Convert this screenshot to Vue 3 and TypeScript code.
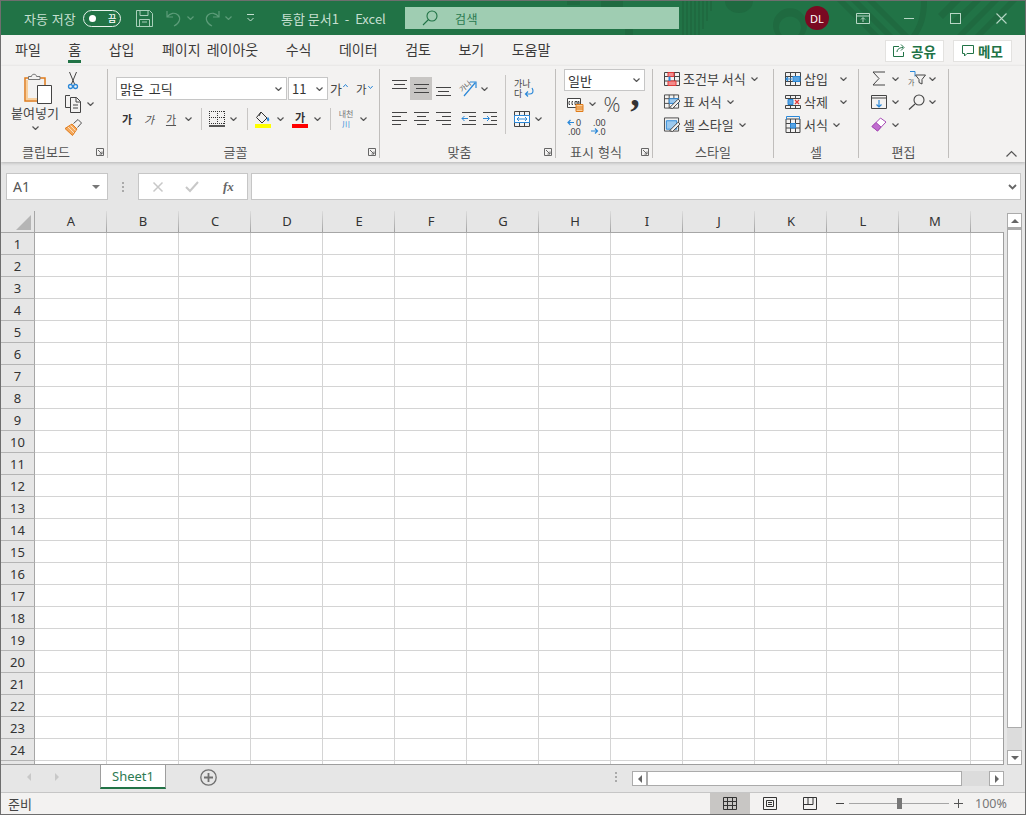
<script setup lang="ts">
const tabs = ['파일', '홈', '삽입', '페이지 레이아웃', '수식', '데이터', '검토', '보기', '도움말']
const columns = ['A', 'B', 'C', 'D', 'E', 'F', 'G', 'H', 'I', 'J', 'K', 'L', 'M', '']
const rows = Array.from({ length: 25 }, (_, i) => (i < 24 ? String(i + 1) : ''))
</script>

<template>
  <div class="window">
    <svg class="sprite" width="0" height="0" aria-hidden="true">
      <symbol id="chev" viewBox="0 0 7 4"><path d="M.5.5 3.5 3.5 6.5.5" fill="none" stroke="#555" stroke-width="1.2" /></symbol>
      <symbol id="chev-pale" viewBox="0 0 7 4"><path d="M.5.5 3.5 3.5 6.5.5" fill="none" stroke="#5c9c79" stroke-width="1.2" /></symbol>
      <symbol id="launcher" viewBox="0 0 8 8"><path d="M.5 7.5V.5h7v7zM2 2l4 4M6 3.5V6H3.5" fill="none" stroke="#666" /></symbol>
    </svg>

    <header class="titlebar">
      <svg class="pattern" width="1024" height="34" viewBox="0 0 1024 34" fill="#1f6a40">
        <path d="M566 0h13v4h-13zM600 0h22v6h-22zM624 28h8v6h-8zM681 0h2v34h-2zM685 0h2v34h-2zM689 0h2v34h-2zM693 0h2v34h-2zM697 0h2v34h-2zM701 0h2v28h-2zM705 0h2v20h-2zM709 0h2v10h-2z" />
        <path d="M724 0h28a14 12 0 0 1-28 0z" />
        <path d="M775 34a17 17 0 1 1 28 0h-6a11 11 0 1 0-16 0z" />
        <path d="M836 0h8l34 34h-8zM850 0h8l34 34h-8zM866 0h8l34 34h-8z" />
        <path d="M920 0h6c0 14-3 25-9 34h-7c7-9 10-20 10-34z" />
        <path d="M950 0h10l-18 18-5-5zM972 0h8l-24 24-5-5zM990 0h8l-34 34h-8zM1008 0h8l-34 34h-8z" />
      </svg>
      <span class="autosave">자동 저장</span>
      <span class="toggle"><i class="knob" /><b>끔</b></span>
      <svg class="ic-save" width="17" height="17" viewBox="0 0 17 17" fill="none" stroke="#a9d0ba"><path d="M.5.5h13l3 3v13H.5zM4 .5v5h8v-5M3.5 16.5v-7h10v7M6 12h5" /></svg>
      <svg class="ic-undo" width="15" height="17" viewBox="0 0 15 17" fill="none" stroke="#5c9c79" stroke-width="1.2"><path d="M1 1v6h6M1 7c3-4 8-5 11-2 3 3 2 8-4 11" /></svg>
      <svg class="ic-chev1" width="7" height="4"><use href="#chev-pale" /></svg>
      <svg class="ic-redo" width="15" height="17" viewBox="0 0 15 17" fill="none" stroke="#5c9c79" stroke-width="1.2"><path d="M14 1v6H8M14 7c-3-4-8-5-11-2-3 3-2 8 4 11" /></svg>
      <svg class="ic-chev2" width="7" height="4"><use href="#chev-pale" /></svg>
      <svg class="ic-more" width="9" height="8" viewBox="0 0 9 8" fill="none" stroke="#c3dfd0"><path d="M1 .5h7M1.5 4 4.5 7l3-3" /></svg>
      <span class="doc">통합 문서1&nbsp; -&nbsp; Excel</span>
      <div class="search">
        <svg width="16" height="16" viewBox="0 0 16 16" fill="none" stroke="#217346" stroke-width="1.1"><circle cx="10" cy="6" r="5" /><path d="M6.5 9.5 1 15" /></svg>
        <span>검색</span>
      </div>
      <span class="avatar">DL</span>
      <svg class="ic-display" width="14" height="11" viewBox="0 0 14 11" fill="none" stroke="#b7d6c5"><path d="M.5.5h13v10H.5zM.5 3h13M7 9V5M5 6.5 7 4.5l2 2" /></svg>
      <span class="ic-min" />
      <span class="ic-max" />
      <svg class="ic-close" width="11" height="11" viewBox="0 0 11 11" fill="none" stroke="#b7d6c5" stroke-width="1.1"><path d="M.5.5l10 10M10.5.5l-10 10" /></svg>
    </header>

    <nav class="tabs">
      <span v-for="tab in tabs" :key="tab" :class="['tab', { active: tab === '홈' }]">{{ tab }}</span>
      <span class="spacer" />
      <button class="share">
        <svg width="14" height="13" viewBox="0 0 14 13" fill="none" stroke="#217346"><path d="M6 2.5H.5v10h10V8M4 8c0-3 3-4.5 6-4.5M8 .5l3 3-3 3" /></svg>
        공유
      </button>
      <button class="share memo">
        <svg width="12" height="12" viewBox="0 0 12 12" fill="none" stroke="#217346"><path d="M.5.5h11v8H5L2.5 11V8.5h-2z" /></svg>
        메모
      </button>
    </nav>

    <section class="ribbon">
      <div class="group g-clip">
        <div class="body clip">
          <div class="paste">
            <svg width="28" height="32" viewBox="0 0 28 32">
              <path d="M1 5h20v23H1z" fill="#f3f2f1" stroke="#e07b1a" stroke-width="1.5" />
              <path d="M2 25h12v2H2zM2 7h2v18H2z" fill="#f8cf9c" />
              <path d="M4.5 6.5v-3h3c0-3 5-3 5 0h3.5v3z" fill="#f3f2f1" stroke="#777" />
              <path d="M13.5 12.5h14v18h-14z" fill="#fff" stroke="#444" />
            </svg>
            <span class="paste-label">붙여넣기</span>
            <svg class="paste-chev" width="7" height="4"><use href="#chev" /></svg>
          </div>
          <div class="clip-tools">
            <svg class="scissors" width="10" height="18" viewBox="0 0 10 18" fill="none" stroke="#444"><path d="M1.5 0l5 12M8.5 0l-5 12" /><circle cx="2.5" cy="14.5" r="2" stroke="#2b88d8" stroke-width="1.3" /><circle cx="7.5" cy="14.5" r="2" stroke="#2b88d8" stroke-width="1.3" /></svg>
            <div class="copy-row">
              <svg width="17" height="18" viewBox="0 0 17 18" fill="none" stroke="#444"><path d="M5 .5H.5v12H5" /><path d="M5.5 2.5h6l4 4v11h-10zM11 2.5V7h4.5M8 10h5M8 13h5" fill="#f3f2f1" /></svg>
              <svg width="7" height="4"><use href="#chev" /></svg>
            </div>
            <svg class="brush" width="17" height="17" viewBox="0 0 17 17"><path d="M0 9.5 7 5l5 5-4.5 6.5z" fill="#f5a95c" stroke="#e07b1a" /><path d="M3 8l6 6M5.5 6.500l5 5" stroke="#f8e0c4" /><path d="M8.5 4.5 13 .5l3.5 3.500-4 4.500" fill="#f3f2f1" stroke="#555" /></svg>
          </div>
        </div>
        <div class="label"><span>클립보드</span><svg class="launch" width="8" height="8"><use href="#launcher" /></svg></div>
      </div>

      <div class="group g-font">
        <div class="body font">
          <div class="font-top">
            <div class="combo c-font"><span>맑은 고딕</span><svg width="7" height="4"><use href="#chev" /></svg></div>
            <div class="combo c-size"><span>11</span><svg width="7" height="4"><use href="#chev" /></svg></div>
            <span class="grow">가<svg width="5" height="3" viewBox="0 0 5 3" fill="none" stroke="#2b88d8"><path d="M.3 3 2.5.5 4.7 3" /></svg></span>
            <span class="shrink">가<svg width="5" height="3" viewBox="0 0 5 3" fill="none" stroke="#2b88d8"><path d="M.3 0l2.2 2.5L4.7 0" /></svg></span>
          </div>
          <div class="font-bottom">
            <b class="ga">가</b>
            <em class="ga light">가</em>
            <u class="ga light">가</u>
            <svg width="7" height="4"><use href="#chev" /></svg>
            <i class="vsep" />
            <svg width="16" height="16" viewBox="0 0 16 16" fill="none" stroke="#333" stroke-dasharray="1 1"><path d="M0 .5h16M0 6.5h16M0 12.5h16M.5 0v13M8.5 0v13M15.5 0v13" /><path d="M0 15h16" stroke-dasharray="none" stroke-width="1.5" stroke="#222" /></svg>
            <svg width="7" height="4"><use href="#chev" /></svg>
            <i class="vsep" />
            <div class="colored">
              <svg width="16" height="13" viewBox="0 0 16 13" fill="none" stroke="#333"><path d="M6 1l6 6-5 5-5.500-5.500zM6 1 4 5" /><path d="M13 6c1.500 1.500 2 3.500 0 4.500-1.500-1-1.500-3 0-4.500z" fill="#2b88d8" stroke="none" /></svg>
              <i class="bar yellow" />
            </div>
            <svg width="7" height="4"><use href="#chev" /></svg>
            <div class="colored"><b class="ga-color">가</b><i class="bar red" /></div>
            <svg width="7" height="4"><use href="#chev" /></svg>
            <i class="vsep" />
            <div class="phonetic"><span>내천</span><i>川</i></div>
            <svg width="7" height="4"><use href="#chev" /></svg>
          </div>
        </div>
        <div class="label"><span>글꼴</span><svg class="launch" width="8" height="8"><use href="#launcher" /></svg></div>
      </div>

      <div class="group g-align">
        <div class="body align">
          <div class="align-main">
            <div class="align-r1">
              <svg class="up" width="15" height="10" viewBox="0 0 15 10" stroke="#444"><path d="M0 .5h15M2 4.5h11M0 8.5h15" /></svg>
              <span class="pressed"><svg width="15" height="10" viewBox="0 0 15 10" stroke="#444"><path d="M0 .5h15M2 4.5h11M0 8.5h15" /></svg></span>
              <svg class="down" width="15" height="10" viewBox="0 0 15 10" stroke="#444"><path d="M0 .5h15M2 4.5h11M0 8.5h15" /></svg>
              <svg width="18" height="17" viewBox="0 0 18 17"><text x="1" y="11" font-size="7" fill="#555" transform="rotate(-40 4 9)" font-family="Noto Sans CJK KR">가나</text><path d="M5 16 16 3M11 2h6v6" fill="none" stroke="#2b88d8" stroke-width="1.2" /></svg>
              <svg width="7" height="4"><use href="#chev" /></svg>
            </div>
            <div class="align-r2">
              <svg width="15" height="14" viewBox="0 0 15 14" stroke="#444"><path d="M0 .5h15M0 4.5h9M0 8.5h15M0 12.5h9" /></svg>
              <svg width="15" height="14" viewBox="0 0 15 14" stroke="#444"><path d="M0 .5h15M3 4.5h9M0 8.5h15M3 12.5h9" /></svg>
              <svg width="15" height="14" viewBox="0 0 15 14" stroke="#444"><path d="M0 .5h15M6 4.5h9M0 8.5h15M6 12.5h9" /></svg>
              <svg width="15" height="14" viewBox="0 0 15 14" fill="none" stroke="#444"><path d="M1 .5h14M8 4.5h7M8 8.5h7M1 12.5h14" /><path d="M7 6.5H1M3.5 4 1 6.5 3.5 9" stroke="#2b88d8" /></svg>
              <svg width="15" height="14" viewBox="0 0 15 14" fill="none" stroke="#444"><path d="M0 .5h14M8 4.5h6M8 8.5h6M0 12.5h14" /><path d="M0 6.5h6M4 4l2.5 2.5L4 9" stroke="#2b88d8" /></svg>
            </div>
          </div>
          <div class="align-wrap">
            <div class="wrap-ic">
              <span>가나<br />다</span>
              <svg width="10" height="10" viewBox="0 0 10 10" fill="none" stroke="#2b88d8" stroke-width="1.2"><path d="M8 0c2 3 1 6-2 6H1.5M4 3.5 1.5 6 4 8.5" /></svg>
            </div>
            <div class="merge-row">
              <svg width="16" height="16" viewBox="0 0 16 16" fill="none" stroke="#444"><path d="M.5.5h15v15H.5zM.5 4.5h15M.5 11.5h15M5.5.5v4M10.5.5v4M5.5 11.5v4M10.5 11.5v4" /><path d="M.5 4.5h15v7H.5z" stroke="#2b88d8" fill="#fff" /><path d="M3 8h10M5 6 3 8l2 2M11 6l2 2-2 2" stroke="#2b88d8" /></svg>
              <svg width="7" height="4"><use href="#chev" /></svg>
            </div>
          </div>
        </div>
        <div class="label"><span>맞춤</span><svg class="launch" width="8" height="8"><use href="#launcher" /></svg></div>
      </div>

      <div class="group g-num">
        <div class="body num">
          <div class="combo c-num"><span>일반</span><svg width="7" height="4"><use href="#chev" /></svg></div>
          <div class="num-r2">
            <svg width="17" height="15" viewBox="0 0 17 15"><path d="M.5 1.5h13v9H.5z" fill="#fff" stroke="#444" /><path d="M3 4.5H2v3h1M6 4.5H5v3h1M8 4.5h2v3H8zM11 4.5h1v3h-1z" fill="none" stroke="#444" /><path d="M9 7.5h7v7H9z" fill="#f8cf9c" stroke="#e07b1a" /><path d="M9 10h7M9 12h7" stroke="#e07b1a" /></svg>
            <svg width="7" height="4"><use href="#chev" /></svg>
            <span class="percent">%</span>
            <span class="comma">,</span>
          </div>
          <div class="num-r3">
            <svg width="16" height="18" viewBox="0 0 16 18"><path d="M7 4.5H1M3.5 2 1 4.5 3.5 7" fill="none" stroke="#2b88d8" stroke-width="1.2" /><text x="9" y="8" font-size="9" fill="#444" font-family="Noto Sans">0</text><text x="1" y="17" font-size="9" fill="#444" font-family="Noto Sans">.00</text></svg>
            <svg width="16" height="18" viewBox="0 0 16 18"><text x="3" y="8" font-size="9" fill="#444" font-family="Noto Sans">.00</text><path d="M1 13h6M5 10.5 7.5 13 5 15.5" fill="none" stroke="#2b88d8" stroke-width="1.2" /><text x="8" y="17" font-size="9" fill="#444" font-family="Noto Sans">.0</text></svg>
          </div>
        </div>
        <div class="label"><span>표시 형식</span><svg class="launch" width="8" height="8"><use href="#launcher" /></svg></div>
      </div>

      <div class="group g-style">
        <div class="body stack">
          <div class="item">
            <svg width="16" height="14" viewBox="0 0 16 14" fill="none" stroke="#444"><path d="M.5.5h15v13H.5zM.5 4.5h15M.5 9h15M5.5.5v13M10.5.5v13" /><path d="M4 .5h6v4H4zM4 9h8v4.5H4z" fill="#f28b8b" stroke="#e03a3a" /><path d="M4.5 4.5h2V9h-2z" fill="#2b88d8" stroke="none" /></svg>
            <span>조건부 서식</span>
            <svg width="7" height="4"><use href="#chev" /></svg>
          </div>
          <div class="item">
            <svg width="17" height="15" viewBox="0 0 17 15" fill="none" stroke="#444"><path d="M.5.5h15v14H.5zM.5 4.5h15M.5 9.5h15M5.5.5v14M10.5.5v14" /><path d="M5.5 4.5h10v5h-10z" fill="#9cc9ee" stroke="#2b88d8" /><path d="M6 14 15 5l2 2-8 8z" fill="#f3f2f1" stroke="#444" /></svg>
            <span>표 서식</span>
            <svg width="7" height="4"><use href="#chev" /></svg>
          </div>
          <div class="item">
            <svg width="17" height="15" viewBox="0 0 17 15" fill="none" stroke="#444"><path d="M.5.5h15v14H.5z" /><path d="M2.5 3.5h11v9h-11z" fill="#9cc9ee" stroke="#2b88d8" /><path d="M6 14 15 5l2 2-8 8z" fill="#f3f2f1" stroke="#444" /></svg>
            <span>셀 스타일</span>
            <svg width="7" height="4"><use href="#chev" /></svg>
          </div>
        </div>
        <div class="label"><span>스타일</span></div>
      </div>

      <div class="group g-cells">
        <div class="body stack">
          <div class="item">
            <svg width="16" height="14" viewBox="0 0 16 14" fill="none" stroke="#444"><path d="M.5.5h15v13H.5zM.5 4.5h15M.5 9.5h15M5.5.5v13M10.5.5v13" /><path d="M8 4.5h7v5H8z" fill="#5aa5e3" stroke="#2b88d8" /><path d="M7 7H1M3 5 1 7l2 2" stroke="#2b88d8" stroke-width="1.2" /></svg>
            <span>삽입</span>
            <svg class="far" width="7" height="4"><use href="#chev" /></svg>
          </div>
          <div class="item">
            <svg width="16" height="14" viewBox="0 0 16 14" fill="none" stroke="#444"><path d="M.5.5h15v3H.5zM.5 10.5h15v3H.5zM5.5.5v3M10.5.5v3M5.5 10.5v3M10.5 10.5v3" /><path d="M3 4.5h5v5H3z" fill="#5aa5e3" stroke="#2b88d8" /><path d="M10 5l4 4M14 5l-4 4" stroke="#e03a3a" stroke-width="1.3" /></svg>
            <span>삭제</span>
            <svg class="far" width="7" height="4"><use href="#chev" /></svg>
          </div>
          <div class="item">
            <svg width="16" height="17" viewBox="0 0 16 17" fill="none" stroke="#444"><path d="M1 3h14v13.5H1zM1 7.5h14M1 12h14M5.5 3v13.5M10.5 3v13.5" /><path d="M5.5 7.5h5V12h-5z" fill="#5aa5e3" stroke="#2b88d8" /><path d="M1.5.5h13M1.5.5v3M14.5.5v3" stroke="#2b88d8" /></svg>
            <span>서식</span>
            <svg width="7" height="4"><use href="#chev" /></svg>
          </div>
        </div>
        <div class="label"><span>셀</span></div>
      </div>

      <div class="group g-edit">
        <div class="body edit">
          <div class="edit-row">
            <svg width="14" height="15" viewBox="0 0 14 15" fill="none" stroke="#444"><path d="M13 1H1l6 6.5L1 14h12" /></svg>
            <svg width="7" height="4"><use href="#chev" /></svg>
            <svg width="18" height="15" viewBox="0 0 18 15" fill="none"><path d="M2 .5h5v5" stroke="#2b88d8" /><text x="0" y="14" font-size="7" fill="#555" font-family="Noto Sans CJK KR">가</text><path d="M7.5 4h10L14 8.5V13l-3-1.5v-3z" stroke="#444" /></svg>
            <svg width="7" height="4"><use href="#chev" /></svg>
          </div>
          <div class="edit-row">
            <svg width="16" height="14" viewBox="0 0 16 14" fill="none" stroke="#444"><path d="M.5.5h15v13H.5zM.5 3h15" /><path d="M8 5v7M5.5 9.5 8 12l2.5-2.5" stroke="#2b88d8" stroke-width="1.2" /></svg>
            <svg width="7" height="4"><use href="#chev" /></svg>
            <svg width="17" height="16" viewBox="0 0 17 16" fill="none" stroke="#444" stroke-width="1.1"><circle cx="11" cy="6" r="5" /><path d="M7 10 1 15.5" /></svg>
            <svg width="7" height="4"><use href="#chev" /></svg>
          </div>
          <div class="edit-row">
            <svg width="16" height="15" viewBox="0 0 16 15"><path d="M1 9.5 9.5 1 15 5l-8.5 9z" fill="#fff" stroke="#a64ab5" /><path d="M1 9.5 5 5.5l5 4.5-3.5 4z" fill="#c06dcf" stroke="#a64ab5" /></svg>
            <svg width="7" height="4"><use href="#chev" /></svg>
          </div>
        </div>
        <div class="label"><span>편집</span></div>
      </div>

      <div class="collapse">
        <svg width="11" height="6" viewBox="0 0 11 6" fill="none" stroke="#555" stroke-width="1.2"><path d="M.5 5.5 5.5.5l5 5" /></svg>
      </div>
    </section>

    <div class="formula">
      <div class="namebox"><span>A1</span><i class="tri" /></div>
      <span class="dots"><i /><i /><i /></span>
      <div class="fx-btns">
        <svg width="10" height="10" viewBox="0 0 10 10" stroke="#c8c8c8" stroke-width="1.5"><path d="M.5.5l9 9M9.5.5l-9 9" /></svg>
        <svg width="14" height="11" viewBox="0 0 14 11" fill="none" stroke="#c8c8c8" stroke-width="2"><path d="M1 6l4 4 8-9" /></svg>
        <em>fx</em>
      </div>
      <div class="input">
        <svg width="9" height="6" viewBox="0 0 9 6" fill="none" stroke="#666" stroke-width="1.8"><path d="M1 1l3.5 3.5L8 1" /></svg>
      </div>
    </div>

    <div class="workbook">
      <div class="sheet">
        <div class="head-row">
          <div class="corner"><i /></div>
          <div v-for="col in columns" :key="col" class="col-head">{{ col }}</div>
        </div>
        <div v-for="row in rows" :key="row" class="row">
          <div class="row-head">{{ row }}</div>
          <div v-for="col in columns" :key="col" class="cell" />
        </div>
      </div>
      <div class="vscroll">
        <span class="sbtn"><i class="t-up" /></span>
        <span class="vthumb" />
        <span class="vtrack" />
        <span class="sbtn"><i class="t-down" /></span>
      </div>
    </div>

    <div class="sheetbar">
      <i class="nav-l" />
      <i class="nav-r" />
      <div class="sheet-tab">Sheet1</div>
      <svg class="add" width="17" height="17" viewBox="0 0 17 17" fill="none" stroke="#707070"><circle cx="8.5" cy="8.5" r="7.7" stroke-width="1.3" /><path d="M8.5 4v9M4 8.5h9" stroke-width="1.8" /></svg>
      <span class="dots bar-dots"><i /><i /><i /></span>
      <div class="hscroll">
        <span class="sbtn"><i class="t-left" /></span>
        <span class="hthumb" />
        <span class="htrack" />
        <span class="sbtn"><i class="t-right" /></span>
      </div>
    </div>

    <footer class="status">
      <span class="ready">준비</span>
      <span class="view on">
        <svg width="14" height="13" viewBox="0 0 14 13" fill="none" stroke="#333"><path d="M.5.5h13v12H.5zM.5 4.5h13M.5 8.5h13M4.5.5v12M9.5.5v12" /></svg>
      </span>
      <span class="view">
        <svg width="14" height="13" viewBox="0 0 14 13" fill="none" stroke="#333"><path d="M.5.5h13v12H.5zM3.5 3.5h7v6h-7zM5 5.5h4M5 7.5h4" /></svg>
      </span>
      <span class="view">
        <svg width="14" height="13" viewBox="0 0 14 13" fill="none" stroke="#333"><path d="M.5.5h13v12H.5zM.5 7.5H10v-7M5 .5v7" /></svg>
      </span>
      <span class="zoom-minus" />
      <div class="slider"><i /></div>
      <span class="zoom-plus" />
      <span class="pct">100%</span>
    </footer>
  </div>
</template>

<style>
html, body { margin: 0; background: #fff; }
</style>

<style scoped>
.window {
  width: 1026px;
  height: 815px;
  box-sizing: border-box;
  border: 1px solid #6e6e6e;
  background: #e6e6e6;
  display: flex;
  flex-direction: column;
  overflow: hidden;
  font-family: "Noto Sans CJK KR", "Noto Sans", sans-serif;
  color: #444;
}
.sprite { position: absolute; }
svg { display: block; flex: none; overflow: visible; }

/* title bar */
.titlebar {
  position: relative;
  height: 34px;
  flex: none;
  background: #217346;
  display: flex;
  align-items: center;
  color: #c5dfd0;
  font-size: 13px;
}
.titlebar > *:not(.pattern) { position: relative; }
.pattern { position: absolute; left: 0; top: 0; }
.autosave { margin-left: 23px; width: 59px; white-space: nowrap; word-spacing: 1px; }
.toggle {
  width: 36px;
  height: 15px;
  border: 1px solid #e8f2ec;
  border-radius: 9px;
  display: flex;
  align-items: center;
}
.knob { width: 7px; height: 7px; margin-left: 5px; border-radius: 50%; background: #fff; }
.toggle b { margin-left: 12px; font-size: 9px; font-weight: 500; color: #fff; }
.ic-save { margin-left: 15px; }
.ic-undo { margin-left: 13px; }
.ic-chev1 { margin-left: 6px; }
.ic-redo { margin-left: 11px; }
.ic-chev2 { margin-left: 5px; }
.ic-more { margin-left: 14px; }
.doc { margin-left: 26px; width: 124px; white-space: nowrap; }
.search {
  width: 274px;
  height: 22px;
  background: #9fcdb2;
  display: flex;
  align-items: center;
  color: #2a7a50;
  font-size: 12px;
}
.search svg { margin-left: 17px; }
.search span { margin-left: 17px; letter-spacing: .5px; }
.avatar {
  margin-left: 126px;
  width: 24px;
  height: 24px;
  border-radius: 50%;
  background: #7a0a22;
  color: #fff;
  font: 11px "Noto Sans", sans-serif;
  display: flex;
  align-items: center;
  justify-content: center;
}
.ic-display { margin-left: 27px; }
.ic-min { margin-left: 34px; width: 10px; height: 1px; background: #b7d6c5; }
.ic-max { margin-left: 36px; width: 9px; height: 9px; border: 1px solid #b7d6c5; }
.ic-close { margin-left: 35px; }

/* tabs */
.tabs {
  height: 31px;
  flex: none;
  background: #f3f2f1;
  display: flex;
  align-items: center;
  gap: 27.5px;
  padding: 0 13px 3px 14px;
  box-sizing: border-box;
  font-size: 14px;
  line-height: 20px;
  color: #3b3a39;
}
.tab { position: relative; word-spacing: 3px; white-space: nowrap; }
.tab.active::after {
  content: "";
  position: absolute;
  left: 0;
  right: 0;
  bottom: -4px;
  height: 3px;
  background: #217346;
}
.spacer { flex: 1; }
.share {
  margin-top: 3px;
  margin-right: -18.5px;
  width: 59px;
  height: 22px;
  border: 1px solid #e3e2e0;
  background: #fff;
  color: #217346;
  font: 700 13.5px "Noto Sans CJK KR", sans-serif;
  display: flex;
  align-items: center;
  justify-content: center;
  gap: 4px;
  padding: 0;
}
.memo { margin-right: 0; }

/* ribbon */
.ribbon {
  height: 96px;
  flex: none;
  background: #f3f2f1;
  display: flex;
  align-items: flex-start;
  padding-top: 3px;
  box-sizing: border-box;
  font-size: 13px;
  position: relative;
  box-shadow: 0 1px 3px rgba(0, 0, 0, .22);
}
.group {
  height: 89px;
  box-sizing: border-box;
  border-right: 1px solid #c0bebc;
  display: flex;
  flex-direction: column;
  flex: none;
}
.g-clip { width: 107px; }
.g-font { width: 272px; }
.g-align { width: 176px; }
.g-num { width: 97px; }
.g-style { width: 121px; }
.g-cells { width: 85px; }
.g-edit { width: 90px; }
.body { height: 77px; flex: none; box-sizing: border-box; }
.label {
  height: 12px;
  line-height: 12px;
  display: flex;
  align-items: center;
  color: #555;
  font-size: 13px;
}
.label span { flex: 1; text-align: center; white-space: nowrap; word-spacing: 1px; }
.launch { margin: 0 3px 0 5px; }

/* clipboard */
.clip { display: flex; }
.paste {
  width: 62px;
  padding-left: 6px;
  box-sizing: border-box;
  display: flex;
  flex-direction: column;
  align-items: center;
}
.paste svg:first-child { margin: 4px 0 0 5px; }
.paste-label { line-height: 16px; white-space: nowrap; }
.paste-chev { margin-top: 5px; }
.clip-tools { padding: 3px 0 0 2px; }
.scissors { margin-left: 3px; }
.copy-row { display: flex; align-items: center; gap: 5px; margin-top: 5px; }
.brush { margin-top: 6px; }

/* font */
.font { padding: 8px 0 0 8px; }
.font-top { display: flex; align-items: center; height: 23px; }
.combo {
  box-sizing: border-box;
  height: 23px;
  background: #fff;
  border: 1px solid #c6c6c6;
  display: flex;
  align-items: center;
  justify-content: space-between;
  padding: 0 4px 0 3px;
  color: #333;
  word-spacing: 2px;
}
.c-font { width: 171px; }
.c-size { width: 40px; margin-left: 1px; }
.c-num { width: 81px; height: 22px; }
.grow, .shrink { display: flex; color: #444; }
.grow { margin-left: 2px; font-size: 13px; }
.shrink { margin-left: 8px; font-size: 11.5px; }
.grow svg, .shrink svg { margin: 5px 0 0 1px; }
.font-bottom {
  display: grid;
  grid-template-columns: 22px 22px 22px 13px 12px 19px 15px 12px 20px 15px 24px 11px 14px 18px 16px;
  align-items: center;
  justify-items: center;
  height: 22px;
  margin-top: 8px;
}
.ga { font-size: 11px; font-weight: 700; font-style: normal; color: #333; }
.ga.light { font-weight: 400; color: #555; text-decoration: none; }
em.ga.light { font-style: italic; }
u.ga.light { text-decoration: underline; }
.vsep { width: 1px; height: 22px; background: #c8c6c4; }
.colored { display: flex; flex-direction: column; align-items: center; width: 16px; }
.bar { width: 16px; height: 4px; }
.yellow { background: #ffff00; }
.red { background: #ff0000; }
.ga-color { font-size: 11px; line-height: 13px; font-weight: 700; color: #333; }
.phonetic { display: flex; flex-direction: column; align-items: center; font-size: 8px; line-height: 10px; color: #777; }
.phonetic i { font-style: normal; color: #2b88d8; }

/* alignment */
.align { display: flex; }
.align-main {
  width: 126px;
  box-sizing: border-box;
  border-right: 1px solid #c8c6c4;
  margin-top: 6px;
  height: 59px;
  padding-left: 8px;
}
.align-r1 {
  display: grid;
  grid-template-columns: 22px 22px 22px 27px 6px;
  align-items: center;
  justify-items: center;
  height: 23px;
  margin-top: 2px;
}
.up { margin-top: -7px; }
.pressed {
  width: 22px;
  height: 23px;
  background: #c8c6c4;
  display: flex;
  align-items: center;
  justify-content: center;
}
.down { margin-top: 7px; }
.align-r2 {
  display: grid;
  grid-template-columns: 22px 22px 22px 28px 16px;
  justify-items: center;
  align-items: center;
  height: 22px;
  margin-top: 8px;
}
.align-wrap { padding: 10px 0 0 8px; }
.wrap-ic {
  display: flex;
  align-items: flex-end;
  height: 20px;
  font-size: 9px;
  line-height: 10px;
}
.wrap-ic svg { margin: 0 0 1px -7px; }
.merge-row { display: flex; align-items: center; gap: 5px; margin-top: 12px; }

/* number */
.num { padding-left: 8px; }
.num-r2 {
  display: grid;
  grid-template-columns: 22px 12px 28px 18px;
  align-items: center;
  justify-items: center;
  height: 24px;
  margin-top: 1px;
}
.percent { font: 300 21px/24px "Open Sans", sans-serif; color: #444; }
.comma { font: 700 38px/24px "Liberation Serif", serif; color: #333; margin-top: -22px; }
.num-r3 { display: grid; grid-template-columns: 22px 24px; justify-items: center; align-items: center; height: 22px; }

/* item stacks */
.stack { margin-top: -2px; margin-bottom: 2px; padding-left: 11px; display: flex; flex-direction: column; }
.item { display: flex; align-items: center; height: 23px; white-space: nowrap; }
.item span { margin-left: 3px; }
.item svg:first-child { width: 16px; }
.item svg:last-child { margin-left: 5px; }
.item .far { margin-left: 12px !important; }

/* editing */
.edit { margin-top: -2px; margin-bottom: 2px; padding-left: 12px; }
.edit-row { display: grid; grid-template-columns: 16px 17px 25px 6px; align-items: center; justify-items: center; height: 23px; }

.collapse { flex: 1; height: 89px; display: flex; justify-content: flex-end; align-items: flex-end; padding: 0 8px 1px 0; box-sizing: border-box; }

/* formula bar */
.formula {
  height: 49px;
  flex: none;
  box-sizing: border-box;
  padding: 11px 4px 11px 5px;
  display: flex;
  color: #555;
}
.namebox, .fx-btns, .input {
  box-sizing: border-box;
  background: #fff;
  border: 1px solid #c6c6c6;
  height: 27px;
  display: flex;
  align-items: center;
}
.namebox { width: 102px; padding: 0 7px 0 6px; justify-content: space-between; font: 14px "Noto Sans", sans-serif; }
.tri { border: 4px solid transparent; border-top: 4px solid #777; border-bottom: 0; }
.dots { display: flex; flex-direction: column; gap: 2px; align-self: center; }
.dots i { width: 2px; height: 2px; background: #aaa; }
.formula .dots { margin: 0 14px; }
.fx-btns { width: 110px; padding-left: 14px; gap: 22px; }
.fx-btns em { font: italic 700 13px "Liberation Serif", serif; color: #666; margin-left: 2px; }
.input { width: 770px; margin-left: 3px; justify-content: flex-end; padding-right: 3px; }

/* sheet */
.workbook { height: 554px; flex: none; display: flex; }
.sheet { width: 1003px; overflow: hidden; border-bottom: 1px solid #9e9e9e; box-sizing: border-box; position: relative; }
.sheet::after { content: ""; position: absolute; right: 0; top: 21px; bottom: 0; width: 1px; background: #9e9e9e; }
.head-row, .row { display: grid; grid-template-columns: 34px repeat(13, 72px) 33px; grid-template-rows: 22px; height: 22px; }
.corner, .col-head { box-sizing: border-box; border-bottom: 1px solid #a6a6a6; }
.corner { border-right: 1px solid #a6a6a6; position: relative; }
.corner i {
  position: absolute;
  right: 3px;
  bottom: 2px;
  border-style: solid;
  border-width: 0 0 15px 15px;
  border-color: transparent transparent #b5b5b5 transparent;
}
.col-head {
  background: linear-gradient(#dcdcdc, #a2a2a2) right / 1px 100% no-repeat;
  text-align: center;
  font: 13px/21px "Noto Sans", sans-serif;
  color: #333;
}
.col-head:last-child { background: none; }
.row-head {
  box-sizing: border-box;
  height: 22px;
  padding-top: 1px;
  border-right: 1px solid #a6a6a6;
  border-bottom: 1px solid #b4b4b4;
  text-align: center;
  font: 13px/21px "Noto Sans", sans-serif;
  color: #333;
}
.cell { box-sizing: border-box; background: #fff; border-right: 1px solid #d4d4d4; border-bottom: 1px solid #d4d4d4; }
.cell:last-child { border-right: 0; }
.vscroll { margin: 2px 0 0 3px; width: 15px; display: flex; flex-direction: column; height: 552px; }
.sbtn {
  flex: none;
  box-sizing: border-box;
  width: 15px;
  height: 15px;
  background: #fff;
  border: 1px solid #ababab;
  display: flex;
  align-items: center;
  justify-content: center;
}
.vthumb { height: 500px; flex: none; box-sizing: border-box; background: #fff; border: 1px solid #ababab; border-top-width: 2px; }
.vtrack { flex: 1; background: #dcdcdc; }
.t-up, .t-down, .t-left, .t-right { width: 0; height: 0; border: 4px solid transparent; }
.t-up { border-top: 0; border-bottom: 4px solid #666; }
.t-down { border-bottom: 0; border-top: 4px solid #666; }
.t-left { border-left: 0; border-right: 4px solid #666; }
.t-right { border-right: 0; border-left: 4px solid #666; }

/* sheet tabs */
.sheetbar {
  height: 28px;
  flex: none;
  box-sizing: border-box;
  border-bottom: 1px solid #c6c6c6;
  display: flex;
  align-items: flex-start;
}
.nav-l, .nav-r { margin-top: 8px; border: 4px solid transparent; }
.nav-l { margin-left: 26px; border-left: 0; border-right: 4px solid #c8c8c8; }
.nav-r { margin-left: 24px; border-right: 0; border-left: 4px solid #c8c8c8; }
.sheet-tab {
  margin: -1px 0 0 41px;
  width: 66px;
  height: 25px;
  box-sizing: border-box;
  background: #fff;
  border: solid #9e9e9e;
  border-width: 0 1px;
  border-bottom: 2px solid #217346;
  text-align: center;
  font: 13px/24px "Noto Sans", sans-serif;
  color: #2c7a52;
}
.add { margin: 4px 0 0 34px; }
.bar-dots { margin: 7px 0 0 398px; align-self: flex-start; }
.hscroll { margin: 6px 0 0 15px; width: 372px; display: flex; }
.hthumb { width: 315px; height: 15px; box-sizing: border-box; background: #fff; border: 1px solid #ababab; }
.htrack { flex: 1; background: #dcdcdc; }

/* status bar */
.status {
  flex: 1;
  background: #f3f2f1;
  display: flex;
  align-items: center;
  font-size: 13px;
}
.ready { margin-left: 7px; width: 702px; }
.view { width: 40px; height: 21px; display: flex; align-items: center; justify-content: center; }
.view.on { background: #c8c6c4; }
.zoom-minus { margin-left: 6px; width: 8px; height: 1px; background: #444; }
.slider { margin-left: 5px; width: 100px; height: 1px; background: #a6a6a6; position: relative; }
.slider i { position: absolute; left: 48px; top: -5px; width: 5px; height: 11px; background: #777; }
.zoom-plus { margin-left: 5px; width: 9px; height: 9px; background: linear-gradient(#555, #555) center / 9px 1px no-repeat, linear-gradient(#555, #555) center / 1px 9px no-repeat; }
.pct { margin-left: 12px; color: #777; font: 12.5px "Noto Sans", sans-serif; }
</style>
